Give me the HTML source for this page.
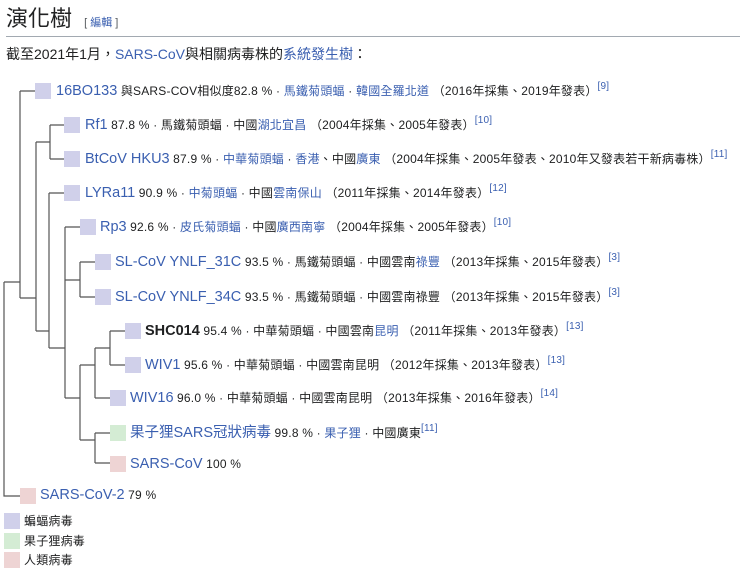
<!DOCTYPE html>
<html><head><meta charset="utf-8"><style>
body{margin:0;width:740px;height:585px;background:#fff;font-family:"Liberation Sans","Noto Sans CJK TC",sans-serif;color:#202122;position:relative;overflow:hidden}
.a{color:#3a5fb0}
.r{position:absolute;white-space:nowrap;font-size:12px;line-height:18px;letter-spacing:0.2px}
.n{font-size:14.5px;letter-spacing:0}
sup{font-size:10px;color:#3a5fb0;vertical-align:6px;line-height:0}
.b{position:absolute;width:16px;height:16px}
.bat{background:#d0d0ea}.civ{background:#d4ecd4}.hum{background:#eed4d4}
</style></head><body>
<div style="position:absolute;left:6px;top:5px;font-size:22px;line-height:28px">演化樹 <span style="font-size:11px;color:#54595d;margin-left:6px">[ <span class="a">編輯</span> ]</span></div>
<div style="position:absolute;left:6px;top:36px;width:734px;height:1px;background:#a2a9b1"></div>
<div style="position:absolute;left:6px;top:44px;font-size:14px;line-height:20px">截至2021年1月，<span class="a">SARS-CoV</span>與相關病毒株的<span class="a">系統發生樹</span>：</div>
<svg style="position:absolute;left:0;top:0" width="740" height="585"><g stroke="#555" stroke-width="1.2" fill="none">
<path d="M4 282V496H20M4 282H20M20 91V298M20 91H35M20 298H36M36 142V331M36 142H50M50 125V159M50 125H64M50 159H64M36 331H49M49 193V348M49 193H64M49 348H65M65 227V398M65 227H80M65 280H80M80 262V297M80 262H95M80 297H95M65 398H80M80 365V440M80 365H95M80 440H95M95 348V398M95 348H110M95 398H110M110 331V365M110 331H125M110 365H125M95 433V463M95 433H110M95 463H110"/>
</g></svg>
<div class="b bat" style="left:35px;top:83px"></div>
<div class="b bat" style="left:64px;top:117px"></div>
<div class="b bat" style="left:64px;top:151px"></div>
<div class="b bat" style="left:64px;top:185px"></div>
<div class="b bat" style="left:80px;top:219px"></div>
<div class="b bat" style="left:95px;top:254px"></div>
<div class="b bat" style="left:95px;top:289px"></div>
<div class="b bat" style="left:125px;top:323px"></div>
<div class="b bat" style="left:125px;top:357px"></div>
<div class="b bat" style="left:110px;top:390px"></div>
<div class="b civ" style="left:110px;top:425px"></div>
<div class="b hum" style="left:110px;top:456px"></div>
<div class="b hum" style="left:20px;top:488px"></div>
<div class="r" style="left:56px;top:82px"><span class="n a">16BO133</span> 與SARS-COV相似度82.8 % · <span class="a">馬鐵菊頭蝠</span> · <span class="a">韓國全羅北道</span> （2016年採集、2019年發表）<sup>[9]</sup></div>
<div class="r" style="left:85px;top:116px"><span class="n a">Rf1</span> 87.8 % · 馬鐵菊頭蝠 · 中國<span class="a">湖北宜昌</span> （2004年採集、2005年發表）<sup>[10]</sup></div>
<div class="r" style="left:85px;top:150px"><span class="n a">BtCoV HKU3</span> 87.9 % · <span class="a">中華菊頭蝠</span> · <span class="a">香港</span>、中國<span class="a">廣東</span> （2004年採集、2005年發表、2010年又發表若干新病毒株）<sup>[11]</sup></div>
<div class="r" style="left:85px;top:184px"><span class="n a">LYRa11</span> 90.9 % · <span class="a">中菊頭蝠</span> · 中國<span class="a">雲南保山</span> （2011年採集、2014年發表）<sup>[12]</sup></div>
<div class="r" style="left:100px;top:218px"><span class="n a">Rp3</span> 92.6 % · <span class="a">皮氏菊頭蝠</span> · 中國<span class="a">廣西南寧</span> （2004年採集、2005年發表）<sup>[10]</sup></div>
<div class="r" style="left:115px;top:253px"><span class="n a">SL-CoV YNLF_31C</span> 93.5 % · 馬鐵菊頭蝠 · 中國雲南<span class="a">祿豐</span> （2013年採集、2015年發表）<sup>[3]</sup></div>
<div class="r" style="left:115px;top:288px"><span class="n a">SL-CoV YNLF_34C</span> 93.5 % · 馬鐵菊頭蝠 · 中國雲南祿豐 （2013年採集、2015年發表）<sup>[3]</sup></div>
<div class="r" style="left:145px;top:322px"><span class="n" style="font-weight:bold">SHC014</span> 95.4 % · 中華菊頭蝠 · 中國雲南<span class="a">昆明</span> （2011年採集、2013年發表）<sup>[13]</sup></div>
<div class="r" style="left:145px;top:356px"><span class="n a">WIV1</span> 95.6 % · 中華菊頭蝠 · 中國雲南昆明 （2012年採集、2013年發表）<sup>[13]</sup></div>
<div class="r" style="left:130px;top:389px"><span class="n a">WIV16</span> 96.0 % · 中華菊頭蝠 · 中國雲南昆明 （2013年採集、2016年發表）<sup>[14]</sup></div>
<div class="r" style="left:130px;top:424px"><span class="n a">果子狸SARS冠狀病毒</span> 99.8 % · <span class="a">果子狸</span> · 中國廣東<sup>[11]</sup></div>
<div class="r" style="left:130px;top:455px"><span class="n a">SARS-CoV</span> 100 %</div>
<div class="r" style="left:40px;top:486px"><span class="n a">SARS-CoV-2</span> 79 %</div>
<div class="b bat" style="left:4px;top:513px"></div><div class="r" style="left:24px;top:512px">蝙蝠病毒</div>
<div class="b civ" style="left:4px;top:533px"></div><div class="r" style="left:24px;top:532px">果子狸病毒</div>
<div class="b hum" style="left:4px;top:552px"></div><div class="r" style="left:24px;top:551px">人類病毒</div>
</body></html>
